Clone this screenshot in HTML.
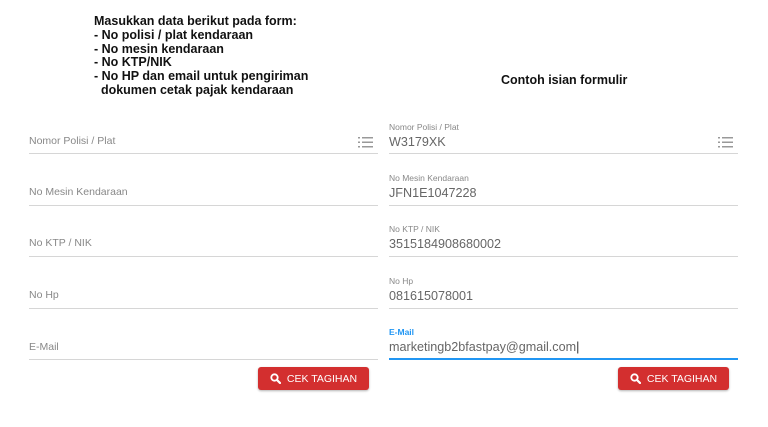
<!DOCTYPE html>
<html><head><style>
body{margin:0;width:768px;height:427px;background:#fff;font-family:"Liberation Sans",sans-serif;position:relative;overflow:hidden}
.a{position:absolute}
.hd{left:94px;top:15px;font-size:12.5px;line-height:13.8px;color:#111;font-weight:bold;white-space:pre}
.line{height:1px;background:#d6d6d6}
.ph{font-size:10.5px;color:#888}
.lb{font-size:8.5px;color:#888}
.val{font-size:12.6px;color:#666}
.btn{background:#d32f2f;color:#fff;font-size:10.5px;border-radius:3px;width:111px;height:23px;display:flex;align-items:center;justify-content:center;box-shadow:0 1px 2px rgba(0,0,0,.3)}
</style></head><body>
<div class="a hd">Masukkan data berikut pada form:
- No polisi / plat kendaraan
- No mesin kendaraan
- No KTP/NIK
- No HP dan email untuk pengiriman
  dokumen cetak pajak kendaraan</div>
<div class="a" style="left:501px;top:73px;font-size:12.5px;font-weight:bold;color:#111">Contoh isian formulir</div>

<div class="a ph" style="left:29px;top:135px">Nomor Polisi / Plat</div>
<div class="a ph" style="left:29px;top:186px">No Mesin Kendaraan</div>
<div class="a ph" style="left:29px;top:237px">No KTP / NIK</div>
<div class="a ph" style="left:29px;top:289px">No Hp</div>
<div class="a ph" style="left:29px;top:341px">E-Mail</div>
<div class="a line" style="left:29px;top:153px;width:349px"></div>
<div class="a line" style="left:29px;top:205px;width:349px"></div>
<div class="a line" style="left:29px;top:256px;width:349px"></div>
<div class="a line" style="left:29px;top:308px;width:349px"></div>
<div class="a line" style="left:29px;top:359px;width:349px"></div>

<div class="a lb" style="left:389px;top:122px">Nomor Polisi / Plat</div>
<div class="a val" style="left:389px;top:135px">W3179XK</div>
<div class="a lb" style="left:389px;top:173px">No Mesin Kendaraan</div>
<div class="a val" style="left:389px;top:186px">JFN1E1047228</div>
<div class="a lb" style="left:389px;top:224px">No KTP / NIK</div>
<div class="a val" style="left:389px;top:237px">3515184908680002</div>
<div class="a lb" style="left:389px;top:276px">No Hp</div>
<div class="a val" style="left:389px;top:289px">081615078001</div>
<div class="a lb" style="left:389px;top:327px;color:#2196f3;font-weight:bold">E-Mail</div>
<div class="a val" style="left:389px;top:340px">marketingb2bfastpay@gmail.com<span style="color:#333">|</span></div>
<div class="a line" style="left:389px;top:153px;width:349px"></div>
<div class="a line" style="left:389px;top:205px;width:349px"></div>
<div class="a line" style="left:389px;top:256px;width:349px"></div>
<div class="a line" style="left:389px;top:308px;width:349px"></div>
<div class="a" style="left:389px;top:358px;width:349px;height:2px;background:#2196f3"></div>

<svg class="a" style="left:358px;top:137px" width="15" height="11" viewBox="0 0 15 11"><g fill="#999"><rect x="0" y="0" width="2" height="1.5"/><rect x="4" y="0" width="11" height="1.5"/><rect x="0" y="4.5" width="2" height="1.5"/><rect x="4" y="4.5" width="11" height="1.5"/><rect x="0" y="9" width="2" height="1.5"/><rect x="4" y="9" width="11" height="1.5"/></g></svg>
<svg class="a" style="left:718px;top:137px" width="15" height="11" viewBox="0 0 15 11"><g fill="#999"><rect x="0" y="0" width="2" height="1.5"/><rect x="4" y="0" width="11" height="1.5"/><rect x="0" y="4.5" width="2" height="1.5"/><rect x="4" y="4.5" width="11" height="1.5"/><rect x="0" y="9" width="2" height="1.5"/><rect x="4" y="9" width="11" height="1.5"/></g></svg>

<div class="a btn" style="left:258px;top:367px"><svg width="11" height="11" viewBox="0 0 11 11" style="margin-right:6px"><circle cx="4.5" cy="4.5" r="3.2" fill="none" stroke="#fff" stroke-width="1.8"/><path d="M7 7L10 10" stroke="#fff" stroke-width="2.2" stroke-linecap="round"/></svg>CEK TAGIHAN</div>
<div class="a btn" style="left:618px;top:367px"><svg width="11" height="11" viewBox="0 0 11 11" style="margin-right:6px"><circle cx="4.5" cy="4.5" r="3.2" fill="none" stroke="#fff" stroke-width="1.8"/><path d="M7 7L10 10" stroke="#fff" stroke-width="2.2" stroke-linecap="round"/></svg>CEK TAGIHAN</div>
</body></html>
